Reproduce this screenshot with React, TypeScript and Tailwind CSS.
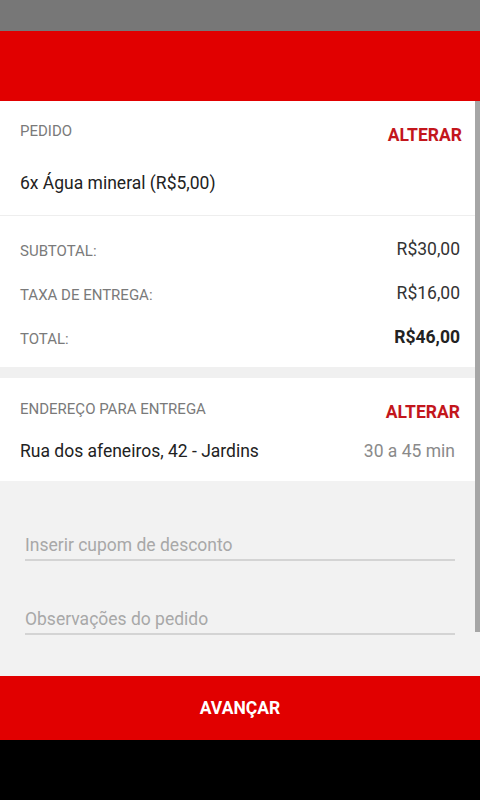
export default function App() {
  return (
    <div className="relative w-[480px] h-[800px] flex flex-col overflow-hidden bg-[#f2f2f2]" style={{ fontFamily: "Roboto, 'Noto Sans', sans-serif" }}>
      <div className="h-[31px] bg-[#777777] shrink-0" />
      <div className="h-[70px] bg-[#e10000] shrink-0" />
      <div className="flex-1 flex flex-col">
        <div className="bg-white px-5 pt-[20px] pb-[20px] border-b border-[#eeeeee]">
          <div className="flex justify-between items-start">
            <span className="text-[15px] leading-[20px] text-[#7a7a7a]">PEDIDO</span>
            <span className="text-[17.5px] leading-[24px] font-bold text-[#c3161c] mt-[2px] mr-[-2px]">ALTERAR</span>
          </div>
          <div className="mt-[24px] text-[17.5px] leading-[24px] text-[#222222]">6x Água mineral (R$5,00)</div>
        </div>
        <div className="bg-white px-5 pt-[12px] pb-[7px]">
          <div className="h-[44px] flex justify-between items-center">
            <span className="text-[15px] text-[#7a7a7a] mt-[2px]">SUBTOTAL:</span>
            <span className="text-[17.5px] text-[#333333] mt-[-2px]">R$30,00</span>
          </div>
          <div className="h-[44px] flex justify-between items-center">
            <span className="text-[15px] text-[#7a7a7a] mt-[2px]">TAXA DE ENTREGA:</span>
            <span className="text-[17.5px] text-[#333333] mt-[-2px]">R$16,00</span>
          </div>
          <div className="h-[44px] flex justify-between items-center">
            <span className="text-[15px] text-[#7a7a7a] mt-[2px]">TOTAL:</span>
            <span className="text-[17.5px] font-bold text-[#222222] mt-[-2px]">R$46,00</span>
          </div>
        </div>
        <div className="h-[11px] bg-[#f0f0f0]" />
        <div className="bg-white px-5 pt-[21px] pb-[18px]">
          <div className="flex justify-between items-start">
            <span className="text-[15px] leading-[20px] text-[#7a7a7a]">ENDEREÇO PARA ENTREGA</span>
            <span className="text-[17.5px] leading-[24px] font-bold text-[#c3161c] mt-[1px]">ALTERAR</span>
          </div>
          <div className="mt-[15px] flex justify-between items-center">
            <span className="text-[17.5px] leading-[24px] text-[#222222]">Rua dos afeneiros, 42 - Jardins</span>
            <span className="text-[17.5px] leading-[24px] text-[#8a8a8a] mr-[5px]">30 a 45 min</span>
          </div>
        </div>
        <div className="flex-1 bg-[#f2f2f2] px-[25px] pt-[52px]">
          <div className="border-b-2 border-[#d4d4d4] pb-[2px] text-[17.5px] leading-[24px] text-[#a8a8a8]">Inserir cupom de desconto</div>
          <div className="mt-[46px] border-b-2 border-[#d4d4d4] pb-[2px] text-[17.5px] leading-[24px] text-[#a8a8a8]">Observações do pedido</div>
        </div>
      </div>
      <div className="h-[64px] bg-[#e10000] shrink-0 flex items-center justify-center">
        <span className="text-[17.5px] font-bold text-white">AVANÇAR</span>
      </div>
      <div className="h-[60px] bg-black shrink-0" />
      <div className="absolute right-0 top-[101px] w-[5px] h-[531px] bg-[#a6a6a6]" />
    </div>
  );
}
